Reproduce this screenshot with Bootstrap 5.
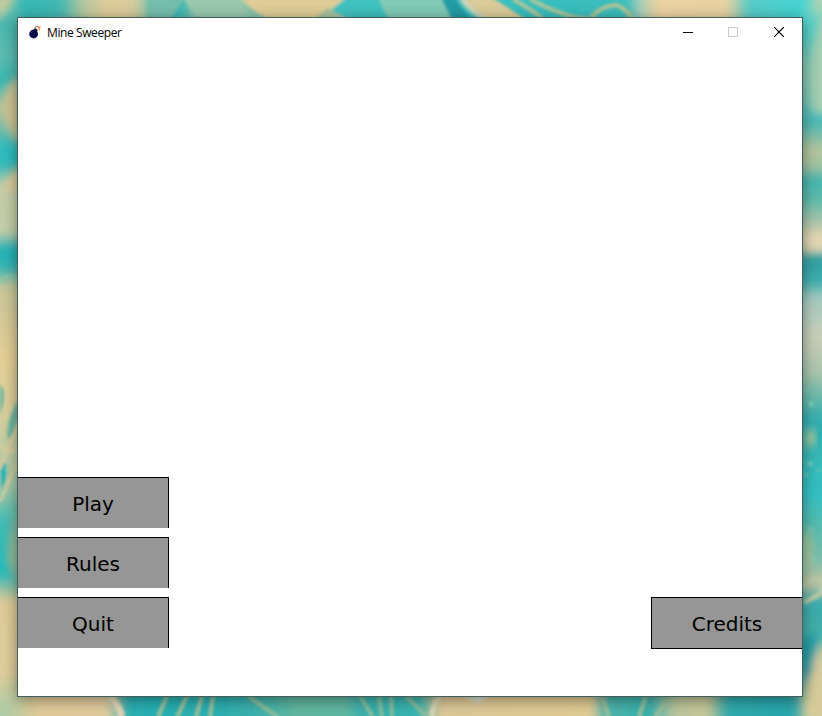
<!DOCTYPE html>
<html lang="en">
<head>
<meta charset="utf-8">
<meta name="viewport" content="width=device-width, initial-scale=1">
<title>Mine Sweeper</title>
<link href="https://cdn.jsdelivr.net/npm/bootstrap@5.3.0/dist/css/bootstrap.min.css" rel="stylesheet">
<style>
  .desktop { width: 822px; height: 716px; background: #35b5b6; }
  .wallpaper { z-index: 0; }
  .app-window { z-index: 1; width: 786px; height: 680px; margin: 17px 0 0 17px; border: 1px solid #45605c; box-shadow: 0 3px 14px rgba(0,0,0,.42); }
  .title-bar { height: 28px; padding-left: 11px; }
  .title-text { font: 12px/18px "Open Sans", "Noto Sans", sans-serif; color: #000; margin: 2px 0 0 5px; letter-spacing: -.4px; }
  .caption-btn { width: 46px; height: 28px; }
  .caption-btn:first-child { padding-left: 2px !important; }
  .game-area { padding-bottom: 47px; }
  .menu-stack { gap: 9px; padding-bottom: 1px; }
  .menu-btn { width: 151px; height: 51px; padding: 2px 0 0; background: #969696; color: #000; border: 0 solid #000; border-width: 1px 1px 0 0; border-radius: 0; font: 20px/24px "DejaVu Sans", Verdana, sans-serif; }
  .menu-btn:hover { background: #8a8a8a; color: #000; border-color: #000; }
  .credits-btn { height: 52px; border-width: 1px 0 1px 1px; }
</style>
<script src="https://cdn.jsdelivr.net/npm/bootstrap@5.3.0/dist/js/bootstrap.bundle.min.js"></script>
</head>
<body class="overflow-hidden">
<div class="desktop position-relative overflow-hidden">
  <svg class="wallpaper position-absolute top-0 start-0" width="822" height="716" viewBox="0 0 822 716" aria-hidden="true">
    <defs>
      <filter id="soft" x="-20%" y="-20%" width="140%" height="140%"><feGaussianBlur stdDeviation="4"/></filter>
      <filter id="fine" x="-20%" y="-20%" width="140%" height="140%"><feGaussianBlur stdDeviation="1.5"/></filter>
      <linearGradient id="west" gradientUnits="userSpaceOnUse" x1="0" y1="0" x2="0" y2="716">
        <stop offset="0" stop-color="#8cc9ac"/><stop offset=".025" stop-color="#48b7b0"/><stop offset=".08" stop-color="#5cbdb0"/><stop offset=".115" stop-color="#35b6b4"/>
        <stop offset=".15" stop-color="#b0c39b"/><stop offset=".18" stop-color="#75bda8"/><stop offset=".205" stop-color="#2cbcc0"/><stop offset=".232" stop-color="#35bcbb"/><stop offset=".26" stop-color="#c5cda8"/>
        <stop offset=".325" stop-color="#c4cfa9"/><stop offset=".345" stop-color="#25b4b9"/><stop offset=".375" stop-color="#35b6b4"/><stop offset=".4" stop-color="#c8c69a"/><stop offset=".5" stop-color="#e5cf96"/>
        <stop offset=".57" stop-color="#dccf9c"/><stop offset=".68" stop-color="#a4c8a9"/><stop offset=".73" stop-color="#40bdb5"/><stop offset=".8" stop-color="#20babd"/><stop offset=".82" stop-color="#88c2a6"/>
        <stop offset=".84" stop-color="#dfcb98"/><stop offset=".94" stop-color="#dfcf9c"/><stop offset="1" stop-color="#a6cba8"/>
      </linearGradient>
      <linearGradient id="east" gradientUnits="userSpaceOnUse" x1="0" y1="0" x2="0" y2="716">
        <stop offset="0" stop-color="#58d5cc"/><stop offset=".05" stop-color="#58cfc6"/><stop offset=".1" stop-color="#88c9b3"/><stop offset=".14" stop-color="#75c4b5"/><stop offset=".17" stop-color="#47b9b7"/>
        <stop offset=".21" stop-color="#b8c59d"/><stop offset=".235" stop-color="#9bc3a3"/><stop offset=".25" stop-color="#45b5af"/><stop offset=".28" stop-color="#60bbaa"/><stop offset=".33" stop-color="#dccfae"/>
        <stop offset=".345" stop-color="#c7cbb0"/><stop offset=".36" stop-color="#319fa2"/><stop offset=".395" stop-color="#3eafae"/><stop offset=".415" stop-color="#a3cac0"/><stop offset=".47" stop-color="#cacfb9"/>
        <stop offset=".52" stop-color="#abc5ad"/><stop offset=".56" stop-color="#5fb7ab"/><stop offset=".59" stop-color="#2fadb0"/><stop offset=".64" stop-color="#37b8b7"/><stop offset=".69" stop-color="#35c0c3"/>
        <stop offset=".74" stop-color="#5bbcad"/><stop offset=".78" stop-color="#79bcaa"/><stop offset=".815" stop-color="#c2c5a2"/><stop offset=".84" stop-color="#3aacad"/><stop offset=".9" stop-color="#49b1a8"/><stop offset="1" stop-color="#cacb9b"/>
      </linearGradient>
      <linearGradient id="north" gradientUnits="userSpaceOnUse" x1="0" y1="0" x2="822" y2="0">
        <stop offset="0" stop-color="#84c7ae"/><stop offset=".03" stop-color="#35b6b4"/><stop offset=".075" stop-color="#45b8b1"/><stop offset=".1" stop-color="#b2c8a0"/><stop offset=".13" stop-color="#e0cb98"/>
        <stop offset=".165" stop-color="#d5cb9d"/><stop offset=".185" stop-color="#67bfae"/><stop offset=".22" stop-color="#33b6b6"/><stop offset=".24" stop-color="#9ac9ad"/><stop offset=".28" stop-color="#aac9a6"/>
        <stop offset=".3" stop-color="#8fc6ac"/><stop offset=".43" stop-color="#38bebe"/><stop offset=".6" stop-color="#37c0c0"/><stop offset=".763" stop-color="#3bbdbc"/><stop offset=".778" stop-color="#a5cfb8"/>
        <stop offset=".8" stop-color="#ebd3a2"/><stop offset=".885" stop-color="#e8d2a2"/><stop offset=".91" stop-color="#58cbc6"/><stop offset=".975" stop-color="#43d3d3"/><stop offset="1" stop-color="#b8d4ad"/>
      </linearGradient>
      <linearGradient id="south" gradientUnits="userSpaceOnUse" x1="0" y1="0" x2="822" y2="0">
        <stop offset="0" stop-color="#aacba8"/><stop offset=".02" stop-color="#becb9f"/><stop offset=".045" stop-color="#e2cc99"/><stop offset=".13" stop-color="#e2cca0"/><stop offset=".155" stop-color="#2cafb0"/>
        <stop offset=".19" stop-color="#26b0b3"/><stop offset=".27" stop-color="#2dafb1"/><stop offset=".32" stop-color="#40b1a9"/><stop offset=".36" stop-color="#62b69f"/><stop offset=".42" stop-color="#61b79f"/><stop offset=".44" stop-color="#38b0ac"/>
        <stop offset=".51" stop-color="#39b4b1"/><stop offset=".535" stop-color="#dcc897"/><stop offset=".72" stop-color="#e0cb93"/><stop offset=".735" stop-color="#50b4a9"/><stop offset=".79" stop-color="#35afad"/>
        <stop offset=".82" stop-color="#b9c59b"/><stop offset=".86" stop-color="#c8c798"/><stop offset=".885" stop-color="#30aaac"/><stop offset=".965" stop-color="#28a6ac"/><stop offset=".985" stop-color="#bdc59c"/><stop offset="1" stop-color="#d1cc9c"/>
      </linearGradient>
    </defs>
    <g filter="url(#soft)">
      <rect x="-30" y="-30" width="70" height="776" fill="url(#west)"/>
      <rect x="782" y="-30" width="70" height="776" fill="url(#east)"/>
      <path d="M-30 -30H852L834 4L804 22V40H18V18L-30 4Z" fill="url(#north)"/>
      <path d="M18 680H804V694L852 730V746H-30V730L18 694Z" fill="url(#south)"/>
    </g>
    <g filter="url(#soft)">
      <path d="M-5 -5H18L-5 24Z" fill="#c7ca9f"/>
      <path d="M20 75Q5 82 3 104Q2 126 20 145Z" fill="#d0c493"/>
      <path d="M20 166Q10 170 4 191L20 190Z" fill="#e4cc98"/>
      <path d="M20 505Q7 532 8 565L20 588Z" fill="#a2bd98"/>
      <path d="M826 -5Q806 55 812 110L828 115V-5Z" fill="#a6ceb0"/>
      <path d="M826 640Q804 664 806 720H830Z" fill="#d7ca99"/>
      <path d="M800 640L818 632L812 672L800 690Z" fill="#229ca5"/>
      <path d="M803 234H826V250H803Z" fill="#e3d6b2"/>
    </g>
    <g filter="url(#fine)">
      <path d="M148 -2H185L170 20H148Z" fill="#76beac"/>
      <path d="M184 -2Q190 15 207 20H245Q240 9 243 -2Z" fill="#99c9ad"/>
      <path d="M240 -2Q253 12 270 20H318Q334 11 346 -2Z" fill="#e0cd97"/>
      <path d="M318 20L346 -2H378L389 20Z" fill="#3fc2c0"/>
      <path d="M328 8L348 19H314Z" fill="#a9c4a0"/>
      <path d="M378 -2H444L466 20H389Z" fill="#82cbb5"/>
      <path d="M441 -2H455Q463 11 474 20H452Z" fill="#249da4"/>
      <path d="M460 -2H493L527 20H480Z" fill="#dbcb98"/>
      <path d="M462 -1Q470 11 484 18" fill="none" stroke="#c9d5bc" stroke-width="5"/>
      <path d="M513 -1Q530 9 542 18M530 -1Q565 18 590 19Q600 6 616 5Q625 8 632 18" fill="none" stroke="#b3c698" stroke-width="4"/>
      <path d="M0 282Q12 270 19 282" fill="none" stroke="#8ac6a8" stroke-width="3"/>
      <path d="M0 384Q8 394 0 415ZM18 400Q5 423 8 440L19 426Z" fill="#6eb7a0"/>
      <path d="M0 465Q7 458 6 470Q6 482 2 490Z" fill="#23b5b5"/>
      <path d="M0 447L12 452L19 444M19 421L0 469M19 460Q9 480 0 502" fill="none" stroke="#ddcf9b" stroke-width="2.5"/>
      <path d="M109 696Q119 704 122 717" fill="none" stroke="#e3d6b9" stroke-width="7"/>
      <path d="M167 696L158 717M187 696L177 717M202 696L196 717M213 696L210 717" fill="none" stroke="#a4c29a" stroke-width="4"/>
      <path d="M248 696L278 717M360 696L373 717M379 696L382 717M391 696L392 717M406 696L427 717" fill="none" stroke="#8bbf9c" stroke-width="4"/>
      <path d="M441 696Q431 706 432 717" fill="none" stroke="#d9d5b4" stroke-width="5"/>
      <path d="M462 696H492L478 703Z" fill="#d9dcc8"/>
      <path d="M602 696L609 717M639 717L646 696M655 717L670 696" fill="none" stroke="#9cbf9a" stroke-width="4"/>
      <path d="M804 586Q812 574 821 581Q826 594 812 598L804 603" fill="none" stroke="#b9c8a7" stroke-width="5"/>
      <g fill="#78cdb7"><circle cx="811" cy="404" r="3"/><circle cx="807" cy="390" r="2"/><circle cx="810" cy="464" r="2.5"/><circle cx="806" cy="475" r="2"/><circle cx="818" cy="470" r="1.5"/><circle cx="810" cy="529" r="2"/><circle cx="813" cy="560" r="2.5"/></g>
    </g>
    <g filter="url(#soft)" fill="#b5c999"><ellipse cx="810" cy="438" rx="5" ry="10"/><ellipse cx="807" cy="551" rx="4" ry="22"/></g>
  </svg>

  <main class="app-window position-relative bg-white d-flex flex-column">
    <header class="title-bar d-flex align-items-center">
      <svg width="13" height="14" viewBox="0 0 13 14" aria-hidden="true">
        <path d="M5.5 4.5L6 2.5Q7 .8 9 1.5L10 3" fill="none" stroke="#8b8580" stroke-width="1.1"/>
        <path d="M5 4L7 3.2L9 5.4L7.4 7Z" fill="#222"/>
        <circle cx="4.6" cy="9" r="4.4" fill="#06064c"/>
        <path d="M2 8.2L3.5 6.5" stroke="#3b3b81"/>
        <path d="M8.6 2.5L10 3L11.5 1.5M9.5 3.5L11 5" fill="none" stroke="#f48b42" stroke-width="1.3"/>
        <path d="M10 1L11 2M8.5 5L10 4.5" stroke="#f5d49a" stroke-width="1"/>
      </svg>
      <span class="title-text">Mine Sweeper</span>
      <div class="d-flex ms-auto">
        <button class="caption-btn btn p-0 border-0 rounded-0 d-flex align-items-center justify-content-center" aria-label="Minimize"><svg width="10" height="10" shape-rendering="crispEdges"><path d="M0 5.5H10" stroke="#000"/></svg></button>
        <button class="caption-btn btn p-0 border-0 rounded-0 d-flex align-items-center justify-content-center" aria-label="Maximize"><svg width="10" height="10" shape-rendering="crispEdges"><path d="M.5 .5H9.5V9.5H.5Z" fill="none" stroke="#ccc"/></svg></button>
        <button class="caption-btn btn p-0 border-0 rounded-0 d-flex align-items-center justify-content-center" aria-label="Close"><svg width="10" height="10"><path d="M0 0L10 10M10 0L0 10" stroke="#000" stroke-width="1.2"/></svg></button>
      </div>
    </header>
    <section class="game-area flex-grow-1 d-flex justify-content-between align-items-end">
      <nav class="menu-stack d-flex flex-column mb-0">
        <button class="menu-btn btn">Play</button>
        <button class="menu-btn btn">Rules</button>
        <button class="menu-btn btn">Quit</button>
      </nav>
      <button class="menu-btn credits-btn btn">Credits</button>
    </section>
  </main>
</div>
</body>
</html>
